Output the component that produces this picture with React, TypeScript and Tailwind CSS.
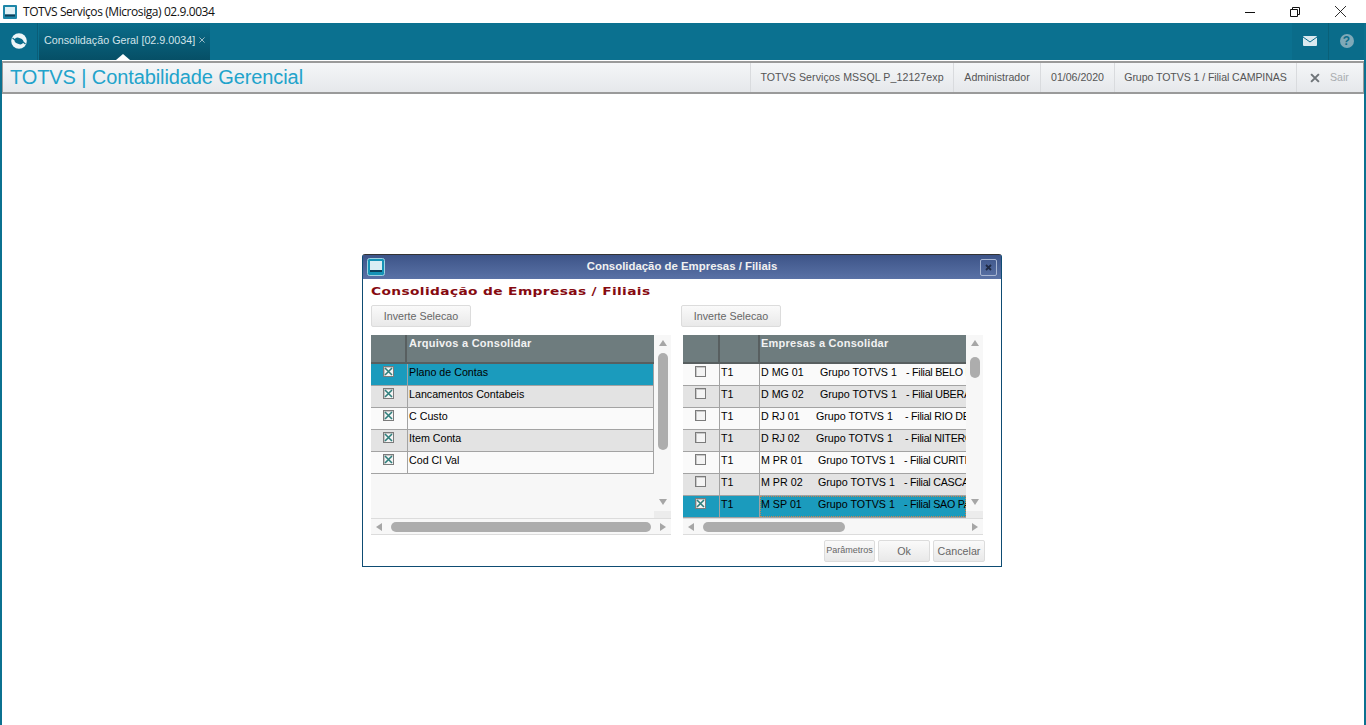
import React from "react";

const sans = "font-['Liberation_Sans',Arial,sans-serif]";

function Check({ on }: { on: boolean }) {
  return (
    <span className="block w-[11px] h-[11px] border border-[#7b7b7b] bg-[#f4f4f4] shadow-[inset_1px_1px_0_#c8c8c8]">
      {on && (
        <svg viewBox="0 0 9 9" className="w-[9px] h-[9px] block">
          <path d="M1 1 L8 8 M8 1 L1 8" stroke="#2f7f7c" strokeWidth="1.6" />
        </svg>
      )}
    </span>
  );
}

function Btn({ label, w, cls = "" }: { label: string; w: string; cls?: string }) {
  return (
    <div
      className={`${w} h-[22px] flex items-center justify-center rounded-[2px] border border-[#dcdcdc] bg-gradient-to-b from-[#fafafa] to-[#e9e9e9] text-[#666] ${cls}`}
    >
      {label}
    </div>
  );
}

function Tri({ dir }: { dir: "u" | "d" | "l" | "r" }) {
  const p = { u: "0,7 4,1 8,7", d: "0,1 8,1 4,7", l: "7,0 7,8 1,4", r: "1,0 1,8 7,4" }[dir];
  return (
    <svg viewBox="0 0 8 8" className="w-2 h-2 block">
      <polygon points={p} fill="#a6a6a6" />
    </svg>
  );
}

const leftRows = ["Plano de Contas", "Lancamentos Contabeis", "C Custo", "Item Conta", "Cod Cl Val"];
const rightRows = [
  { code: "D MG 01", filial: "- Filial BELO HORIZONTE", a: "w-[59px]", b: "w-[86px]" },
  { code: "D MG 02", filial: "- Filial UBERABA", a: "w-[59px]", b: "w-[86px]" },
  { code: "D RJ 01", filial: "- Filial RIO DE JANEIRO", a: "w-[55px]", b: "w-[89px]" },
  { code: "D RJ 02", filial: "- Filial NITEROI", a: "w-[55px]", b: "w-[89px]" },
  { code: "M PR 01", filial: "- Filial CURITIBA", a: "w-[57px]", b: "w-[86px]" },
  { code: "M PR 02", filial: "- Filial CASCAVEL", a: "w-[57px]", b: "w-[86px]" },
  { code: "M SP 01", filial: "- Filial SAO PAULO", a: "w-[57px]", b: "w-[86px]" },
];

function rowBg(i: number, sel: boolean) {
  if (sel) return "bg-[#1b9bbd]";
  return i % 2 === 0 ? "bg-[#fafafa]" : "bg-[#e3e3e3]";
}

function LeftGrid() {
  return (
    <div className="w-[300px] h-[200px] flex flex-col bg-[#f7f7f7]">
      <div className="flex h-[183px]">
        <div className="w-[283px]">
          <div className="flex h-[29px] bg-[#6e7c7e] border-b-2 border-[#585f60] font-bold text-[11px] tracking-[0.25px]">
            <div className="w-[36px] border-r-2 border-[#585f60]" />
            <div className="pl-[2px] pt-[1px] leading-[14px] text-[#f2f2f2]">Arquivos a Consolidar</div>
          </div>
          {leftRows.map((t, i) => (
            <div
              key={t}
              className={`flex h-[22px] border-b border-r border-[#a3a3a3] ${rowBg(i, i === 0)}`}
            >
              <div className="w-[37px] shrink-0 pl-[12px] pt-[2px] border-r border-[#a3a3a3]">
                <Check on />
              </div>
              <div className="pl-[1px] pt-[1px] leading-[14px] text-black whitespace-nowrap">{t}</div>
            </div>
          ))}
        </div>
        <div className="w-[17px] flex flex-col items-center pt-[4px]">
          <Tri dir="u" />
          <div className="w-[10px] h-[97px] rounded-[5px] bg-[#adadad] mt-[6px]" />
          <div className="mt-auto mb-[5px]">
            <Tri dir="d" />
          </div>
          <div className="w-full h-[7px] bg-[#ececec]" />
        </div>
      </div>
      <div className="h-[17px] border-y border-[#dcdcdc] flex items-center px-[4px] gap-[8px]">
        <Tri dir="l" />
        <div className="w-[261px] h-[10px] rounded-[5px] bg-[#adadad]" />
        <div className="ml-auto">
          <Tri dir="r" />
        </div>
      </div>
    </div>
  );
}

function RightGrid() {
  return (
    <div className="w-[300px] h-[200px] flex flex-col bg-[#f7f7f7]">
      <div className="flex h-[183px]">
        <div className="w-[283px] overflow-hidden">
          <div className="flex h-[29px] bg-[#6e7c7e] border-b-2 border-[#585f60] font-bold text-[11px] tracking-[0.25px]">
            <div className="w-[37px] border-r-2 border-[#585f60]" />
            <div className="w-[40px] border-r-2 border-[#585f60]" />
            <div className="pl-[1px] pt-[1px] leading-[14px] text-[#f2f2f2]">Empresas a Consolidar</div>
          </div>
          {rightRows.map((r, i) => {
            const sel = i === 6;
            return (
              <div key={r.code} className={`flex h-[22px] border-b border-[#a3a3a3] ${rowBg(i, sel)}`}>
                <div className="w-[37px] shrink-0 pl-[12px] pt-[2px] border-r border-[#a3a3a3]">
                  <Check on={sel} />
                </div>
                <div className="w-[40px] shrink-0 pl-[1px] pt-[1px] leading-[14px] text-black border-r border-[#a3a3a3]">
                  T1
                </div>
                <div
                  className={`flex-1 flex pt-[1px] pl-[1px] leading-[14px] text-black whitespace-nowrap overflow-hidden ${
                    sel ? "outline-1 -outline-offset-1 outline-dotted outline-[#c9834f]" : ""
                  }`}
                >
                  <span className={`${r.a} shrink-0`}>{r.code}</span>
                  <span className={`${r.b} shrink-0`}>Grupo TOTVS 1</span>
                  <span className="tracking-[-0.25px]">{r.filial}</span>
                </div>
              </div>
            );
          })}
        </div>
        <div className="w-[17px] flex flex-col items-center pt-[4px]">
          <Tri dir="u" />
          <div className="w-[10px] h-[21px] rounded-[5px] bg-[#adadad] mt-[10px]" />
          <div className="mt-auto mb-[5px]">
            <Tri dir="d" />
          </div>
          <div className="w-full h-[7px] bg-[#ececec]" />
        </div>
      </div>
      <div className="h-[17px] border-y border-[#dcdcdc] flex items-center px-[4px] gap-[8px]">
        <Tri dir="l" />
        <div className="w-[142px] h-[10px] rounded-[5px] bg-[#adadad]" />
        <div className="ml-auto">
          <Tri dir="r" />
        </div>
      </div>
    </div>
  );
}

function Dialog() {
  return (
    <div className="w-[640px] h-[313px] rounded-t-[3px] border border-[#0e4c73] border-t-[#333] bg-white flex flex-col text-[10.7px]">
      <div className="h-[24px] bg-gradient-to-b from-[#3d5488] to-[#5a72a6] flex items-center pl-[4px] pr-[4px] text-white">
        <svg viewBox="0 0 18 18" className="w-[18px] h-[18px] block shrink-0">
          <rect x="0.5" y="0.5" width="17" height="17" rx="2" fill="#1593b6" stroke="#9fd3e2" />
          <rect x="3" y="3" width="12" height="9" fill="#d9eef4" />
          <rect x="3" y="12" width="12" height="2" fill="#0b3f5a" />
        </svg>
        <div className="flex-1 text-center font-bold text-[11.4px] text-[#f1f1f1] pr-[1px]">
          Consolidação de Empresas / Filiais
        </div>
        <div className="w-[17px] h-[17px] rounded-[2px] border border-[#a8b6d2] flex items-center justify-center">
          <svg viewBox="0 0 7 7" className="w-[7px] h-[7px]">
            <path d="M1 1 L6 6 M6 1 L1 6" stroke="#1f2a44" strokeWidth="1.8" />
          </svg>
        </div>
      </div>
      <div className="pl-[8px] pt-[6px] h-[26px]">
        <div className="origin-left scale-x-[1.25] w-fit whitespace-nowrap font-['DejaVu_Sans'] font-bold text-[11px] leading-[14px] text-[#860a10] tracking-[0.3px]">
          Consolidação de Empresas / Filiais
        </div>
      </div>
      <div className="flex pl-[8px] h-[30px]">
        <Btn label="Inverte Selecao" w="w-[100px]" />
        <Btn label="Inverte Selecao" w="w-[100px]" cls="ml-[210px]" />
      </div>
      <div className="flex pl-[8px]">
        <LeftGrid />
        <div className="w-[12px]" />
        <RightGrid />
      </div>
      <div className="flex justify-end pr-[16px] pt-[5px] gap-[3px]">
        <Btn label="Parâmetros" w="w-[51px]" cls="text-[9px]" />
        <Btn label="Ok" w="w-[52px]" />
        <Btn label="Cancelar" w="w-[52px]" />
      </div>
    </div>
  );
}

function Cell({ w, children, cls = "" }: { w: string; children: React.ReactNode; cls?: string }) {
  return (
    <div className={`${w} h-full border-l border-[#d9dbde] flex items-center justify-center whitespace-nowrap ${cls}`}>
      {children}
    </div>
  );
}

export default function App() {
  return (
    <div className={`w-[1366px] h-[725px] flex flex-col bg-white overflow-hidden ${sans}`}>
      {/* window title bar */}
      <div className="h-[23px] flex items-center bg-white shrink-0">
        <svg viewBox="0 0 14 14" className="w-[14px] h-[14px] ml-[3px] block">
          <rect width="14" height="14" rx="1" fill="#1d86a8" />
          <rect x="2" y="2" width="10" height="7.5" fill="#dff0f5" />
          <rect x="2" y="9.5" width="10" height="2" fill="#0d3f58" />
        </svg>
        <div className="ml-[6px] text-[12px] text-[#111] font-['Open_Sans'] tracking-[-0.42px]">
          TOTVS Serviços (Microsiga) 02.9.0034
        </div>
        <div className="ml-auto flex items-center">
          <svg viewBox="0 0 10 10" className="w-[10px] h-[10px] mr-[35px]">
            <path d="M0 5.5 H10" stroke="#111" />
          </svg>
          <svg viewBox="0 0 10 10" className="w-[10px] h-[10px] mr-[35px]">
            <path d="M.5 2.5 H7.5 V9.5 H.5 Z M2.5 2.5 V.5 H9.5 V7.5 H7.5" stroke="#111" fill="none" />
          </svg>
          <svg viewBox="0 0 10 10" className="w-[11px] h-[11px] mr-[20px]">
            <path d="M0 0 L10 10 M10 0 L0 10" stroke="#111" strokeWidth="0.8" />
          </svg>
        </div>
      </div>
      {/* tab bar */}
      <div className="h-[37px] bg-[#0b7190] shrink-0 flex">
        <div className="w-[38px] bg-[#0a6c8b] border-r border-[#0a5d78] flex items-center justify-center">
          <svg viewBox="0 0 16 16" className="w-[16px] h-[16px] mb-[2px]">
            <circle cx="8" cy="8" r="7.8" fill="#eef6f8" />
            <ellipse cx="8" cy="8" rx="4.6" ry="3" transform="rotate(20 8 8)" fill="#0a6c8b" />
            <path d="M1.5 5 L4 7 M14.5 11 L12 9" stroke="#0a6c8b" strokeWidth="1.1" />
          </svg>
        </div>
        <div className="ml-[1px] w-[171px] relative bg-gradient-to-b from-[#0a6c8a] to-[#064f66] flex items-center pl-[5px] pb-[2px] text-[10.75px] text-[#d3e3e9]">
          <span>Consolidação Geral [02.9.0034]</span>
          <svg viewBox="0 0 7 7" className="w-[6px] h-[6px] ml-[4px] mb-[2px]">
            <path d="M.5 .5 L6.5 6.5 M6.5 .5 L.5 6.5" stroke="#b5ccd4" />
          </svg>
          <div className="absolute left-[77px] bottom-0 w-0 h-0 border-x-[7px] border-x-transparent border-b-[6px] border-b-white" />
        </div>
        <div className="ml-auto flex mr-[2px]">
          <div className="w-[37px] bg-[#0a6c8a] flex items-center justify-center border-r border-[#0a6078]">
            <svg viewBox="0 0 14 10" className="w-[14px] h-[10px] mb-[2px]">
              <rect width="14" height="10" rx="1" fill="#dbe9ee" />
              <path d="M0 1 L7 6 L14 1" stroke="#0a6c8a" fill="none" />
            </svg>
          </div>
          <div className="w-[35px] bg-[#0a6c8a] flex items-center justify-center">
            <div className="w-[14px] h-[14px] mb-[2px] rounded-full bg-[#7fa9b8] text-[#0a6c8a] font-bold text-[12px] leading-[14px] text-center">
              ?
            </div>
          </div>
        </div>
      </div>
      {/* app header and body */}
      <div className="flex-1 flex flex-col border-x-2 border-[#0b7190] min-h-0">
        <div className="h-[33px] mt-[1px] shrink-0 border-y-2 border-x border-[#9a9a9a] bg-gradient-to-b from-[#f4f6f8] to-[#e6e8eb] flex items-center">
          <div className="ml-[7px] pb-[2px] text-[20px] leading-[24px] text-[#22a3cb] tracking-[-0.1px]">TOTVS | Contabilidade Gerencial</div>
          <div className="ml-auto flex items-center h-full text-[10.6px] text-[#555]">
            <Cell w="w-[203px]" cls="tracking-[0.08px]">TOTVS Serviços MSSQL P_12127exp</Cell>
            <Cell w="w-[87px]">Administrador</Cell>
            <Cell w="w-[74px]">01/06/2020</Cell>
            <Cell w="w-[182px]" cls="tracking-[-0.08px]">Grupo TOTVS 1 / Filial CAMPINAS</Cell>
            <div className="w-[67px] h-full border-l border-[#d9dbde] flex items-center pl-[13px]">
              <svg viewBox="0 0 9 9" className="w-[10px] h-[10px]">
                <path d="M1 1 L8 8 M8 1 L1 8" stroke="#6e7478" strokeWidth="1.8" />
              </svg>
              <span className="ml-[10px] text-[#a9adb0]">Sair</span>
            </div>
          </div>
        </div>
        <div className="flex-1 flex items-start justify-center pt-[160px] pr-[2px]">
          <Dialog />
        </div>
      </div>
    </div>
  );
}
